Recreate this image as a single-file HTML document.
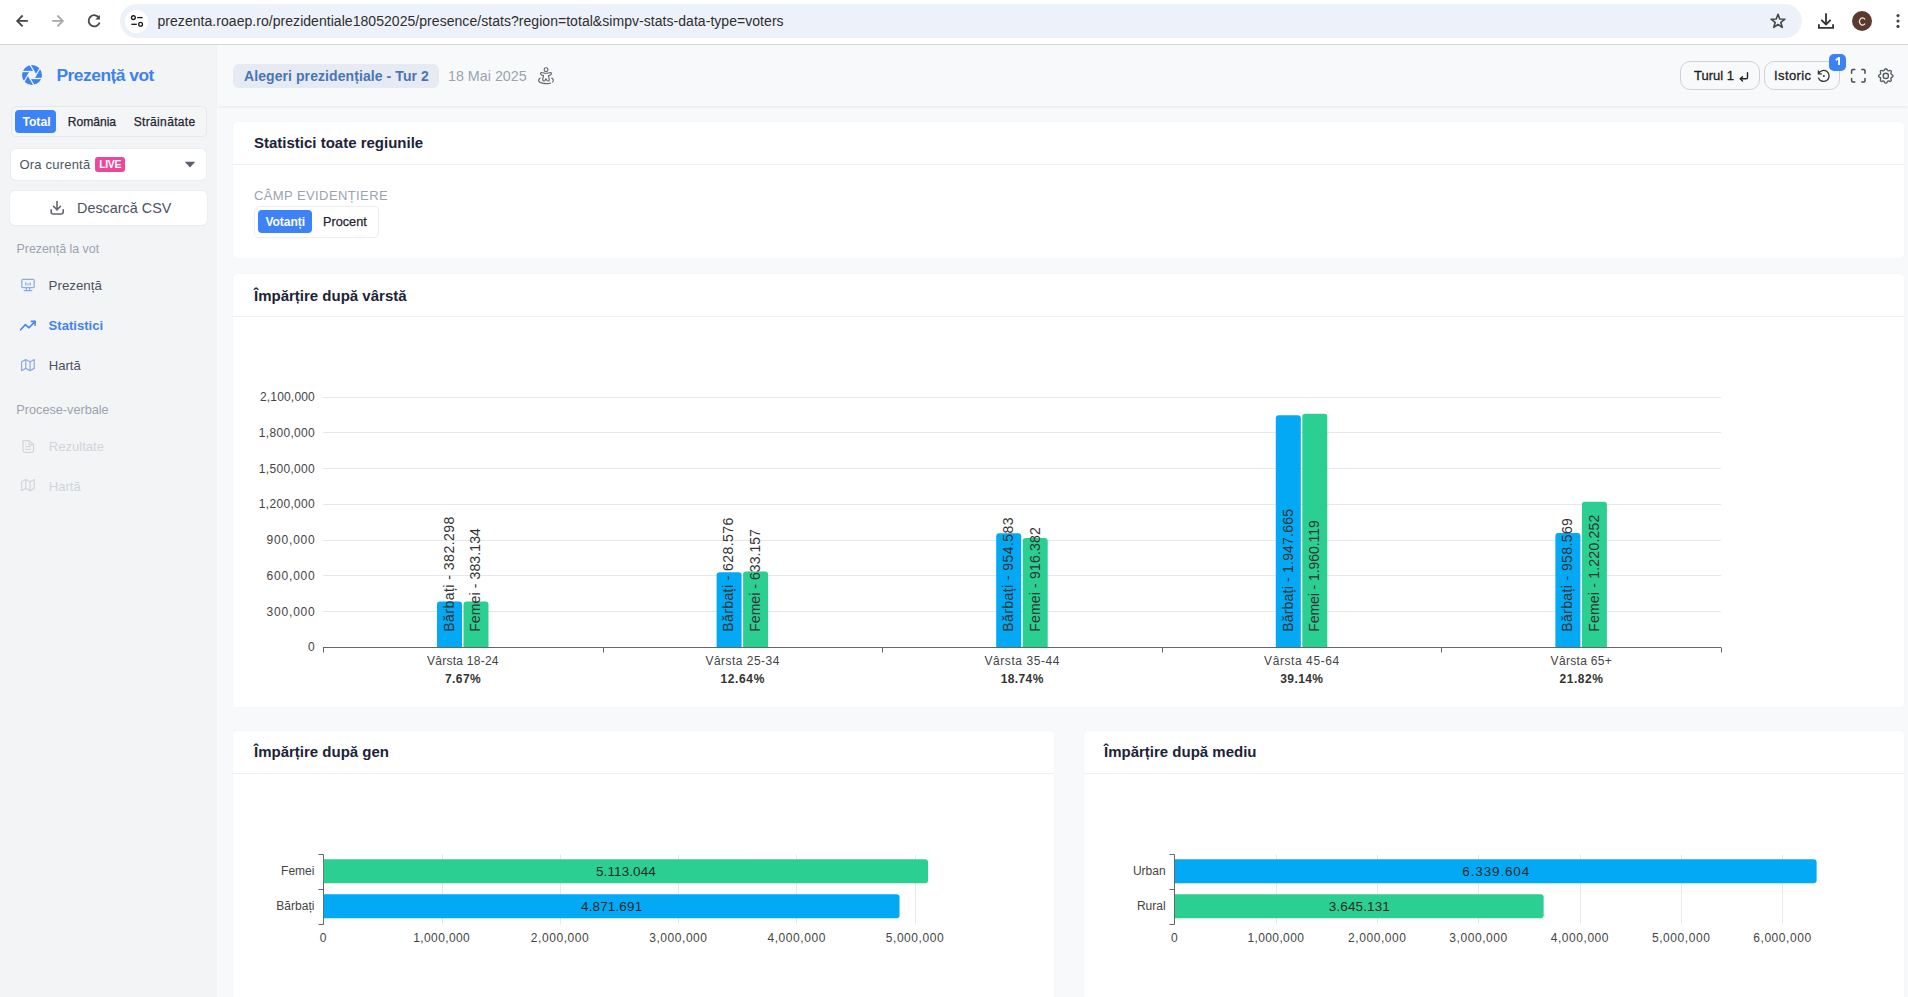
<!DOCTYPE html>
<html><head><meta charset="utf-8">
<style>
*{box-sizing:border-box;margin:0;padding:0}
html,body{width:1908px;height:997px;overflow:hidden;background:#f8f9fb;font-family:"Liberation Sans",sans-serif;color:#111}
.t{position:absolute;white-space:nowrap;line-height:1}
#chrome{position:absolute;left:0;top:0;width:1908px;height:45px;background:#fff;border-bottom:1px solid #d5d7da}
#addr{position:absolute;left:120px;top:4px;width:1682px;height:34px;border-radius:17px;background:#edf2fa}
#side{position:absolute;left:0;top:45px;width:217px;height:952px;background:#f3f4f6}
#hdr{position:absolute;left:217px;top:45px;width:1691px;height:61px;background:#f8f9fb;box-shadow:0 2px 3px -1px rgba(0,0,0,.08)}
.card{position:absolute;background:#fff;border-radius:4px;box-shadow:0 0 2px rgba(0,0,0,.045)}
.card .ch{position:absolute;left:0;top:0;right:0;height:43px;border-bottom:1px solid #eef0f3}
.ttl{position:absolute;font-size:15px;font-weight:700;color:#1c2337;white-space:nowrap;line-height:1}
svg.full{position:absolute;left:0;top:0;width:1908px;height:997px;overflow:visible}
svg text{font-family:"Liberation Sans",sans-serif}
.btnw{position:absolute;background:#fff;border-radius:5px;box-shadow:0 0 0 1px #eceef1,0 1px 2px rgba(0,0,0,.04)}
.pill{position:absolute;border:1px solid #cfd3d8;border-radius:10px;background:#f8f9fb}
</style></head><body>
<div id="chrome">
  <div id="addr"></div>
  <div style="position:absolute;left:125px;top:10px;width:23px;height:23px;border-radius:50%;background:#fff"></div>
  <div class="t" style="left:157.5px;top:14px;font-size:14px;letter-spacing:0.045px;color:#2e2e2e">prezenta.roaep.ro/prezidentiale18052025/presence/stats?region=total&amp;simpv-stats-data-type=voters</div>
</div>
<div id="side"></div>
<div id="hdr"></div>

<!-- sidebar -->
<div class="t" style="left:56.5px;top:66.5px;font-size:17.4px;font-weight:700;letter-spacing:-0.5px;color:#3d82ef">Prezență vot</div>
<div style="position:absolute;left:11px;top:106px;width:196px;height:31px;border:1px solid #e6e8eb;border-radius:5px;background:#f4f5f7"></div>
<div style="position:absolute;left:15px;top:110px;width:41px;height:23px;border-radius:4px;background:#3d82f6"></div>
<div class="t" style="left:22.4px;top:115.85px;font-size:12.2px;font-weight:700;color:#fff">Total</div>
<div class="t" style="left:67.7px;top:115.85px;font-size:12.1px;color:#1f2430;-webkit-text-stroke:0.25px #1f2430">România</div>
<div class="t" style="left:133.7px;top:115.85px;font-size:12px;letter-spacing:0.35px;color:#1f2430;-webkit-text-stroke:0.25px #1f2430">Străinătate</div>

<div class="btnw" style="left:11px;top:149px;width:195px;height:31px"></div>
<div class="t" style="left:19.5px;top:157.7px;font-size:13px;letter-spacing:0.2px;color:#4b5563">Ora curentă</div>
<div style="position:absolute;left:95px;top:157px;width:30px;height:15px;border-radius:3px;background:#ec4899"></div>
<div class="t" style="left:99.2px;top:160px;font-size:10.4px;font-weight:700;color:#fff;letter-spacing:-0.3px">LIVE</div>

<div class="btnw" style="left:10px;top:191px;width:197px;height:34px"></div>
<div class="t" style="left:77px;top:201.1px;font-size:14.4px;color:#4b5260">Descarcă CSV</div>

<div class="t" style="left:16.5px;top:243.35px;font-size:12.4px;color:#9ca3af">Prezență la vot</div>
<div class="t" style="left:48.6px;top:278.9px;font-size:13.3px;color:#4b5260">Prezență</div>
<div class="t" style="left:48.6px;top:319px;font-size:13.1px;font-weight:700;color:#4382e9">Statistici</div>
<div class="t" style="left:48.7px;top:358.85px;font-size:13.1px;color:#4b5260">Hartă</div>
<div class="t" style="left:16.3px;top:404.05px;font-size:12.7px;color:#9ca3af">Procese-verbale</div>
<div class="t" style="left:48.7px;top:440.2px;font-size:13.1px;color:#d1d5db">Rezultate</div>
<div class="t" style="left:48.7px;top:480px;font-size:13.1px;color:#d1d5db">Hartă</div>

<!-- header -->
<div style="position:absolute;left:233px;top:64px;width:206px;height:24px;border-radius:6px;background:#e6ebf3"></div>
<div class="t" style="left:244px;top:68.9px;font-size:14px;font-weight:700;letter-spacing:0.08px;color:#4a74b4">Alegeri prezidențiale - Tur 2</div>
<div class="t" style="left:448px;top:68.9px;font-size:14.3px;color:#9ca3af">18 Mai 2025</div>

<div class="pill" style="left:1680px;top:61px;width:80px;height:29px"></div>
<div class="t" style="left:1694px;top:68.9px;font-size:13px;color:#1f1f1f;-webkit-text-stroke:0.3px #1f1f1f">Turul 1</div>
<div class="pill" style="left:1764px;top:61px;width:76px;height:29px"></div>
<div class="t" style="left:1774px;top:68.9px;font-size:13px;letter-spacing:0.4px;color:#1f1f1f;-webkit-text-stroke:0.3px #1f1f1f">Istoric</div>
<div style="position:absolute;left:1829px;top:54px;width:17px;height:17px;border-radius:5px;background:#3b82f6"></div>


<!-- cards -->
<div class="card" style="left:233px;top:122px;width:1671px;height:136px"><div class="ch"></div></div>
<div class="card" style="left:233px;top:274px;width:1671px;height:433px"><div class="ch"></div></div>
<div class="card" style="left:233px;top:731px;width:821px;height:280px"><div class="ch"></div></div>
<div class="card" style="left:1084px;top:731px;width:820px;height:280px"><div class="ch"></div></div>

<div class="ttl" style="left:254px;top:135.35px">Statistici toate regiunile</div>
<div class="ttl" style="left:254px;top:287.6px">Împărțire după vârstă</div>
<div class="ttl" style="left:254px;top:744.2px">Împărțire după gen</div>
<div class="ttl" style="left:1104px;top:744.2px">Împărțire după mediu</div>

<div class="t" style="left:254px;top:188.6px;font-size:13px;letter-spacing:0.4px;color:#9ca3af">CÂMP EVIDENȚIERE</div>
<div style="position:absolute;left:254px;top:206px;width:125px;height:32px;border:1px solid #eceef1;border-radius:5px;background:#fff"></div>
<div style="position:absolute;left:258px;top:210px;width:54px;height:23px;border-radius:4px;background:#3d82f6"></div>
<div class="t" style="left:265.4px;top:215.5px;font-size:12px;font-weight:700;color:#fff">Votanți</div>
<div class="t" style="left:323px;top:215.5px;font-size:12.7px;color:#1f2430;-webkit-text-stroke:0.25px #1f2430">Procent</div>

<svg class="full" viewBox="0 0 1908 997">
<circle cx="32" cy="75" r="10" fill="#3d82ef"/><polygon points="36.04,75.00 34.02,78.50 29.98,78.50 27.96,75.00 29.98,71.50 34.02,71.50" fill="#f3f4f6"/><line x1="34.02" y1="71.50" x2="22.13" y2="71.50" stroke="#f3f4f6" stroke-width="1.3"/><line x1="36.04" y1="75.00" x2="30.10" y2="64.70" stroke="#f3f4f6" stroke-width="1.3"/><line x1="34.02" y1="78.50" x2="39.96" y2="68.20" stroke="#f3f4f6" stroke-width="1.3"/><line x1="29.98" y1="78.50" x2="41.87" y2="78.50" stroke="#f3f4f6" stroke-width="1.3"/><line x1="27.96" y1="75.00" x2="33.90" y2="85.30" stroke="#f3f4f6" stroke-width="1.3"/><line x1="29.98" y1="71.50" x2="24.04" y2="81.80" stroke="#f3f4f6" stroke-width="1.3"/><g fill="none" stroke="#474747" stroke-width="1.8" stroke-linecap="butt"><path d="M27.8,20.9 H17.5"/><path d="M22.6,15.5 L17.2,20.9 L22.6,26.3"/></g>
<g fill="none" stroke="#a9a9a9" stroke-width="1.8"><path d="M52.2,20.9 H62.5"/><path d="M57.4,15.5 L62.8,20.9 L57.4,26.3"/></g>
<g fill="none" stroke="#474747" stroke-width="1.8"><path d="M99.2,18.2 A5.6,5.6 0 1 0 99.6,22.5"/></g><path d="M99.9,14.9 V19.6 H95.2 Z" fill="#474747"/>
<g fill="none" stroke="#1f1f1f" stroke-width="1.35"><circle cx="133.4" cy="17.6" r="1.9"/><path d="M137.2,17.6 H142.6"/><circle cx="140.6" cy="24.3" r="1.9"/><path d="M131.3,24.3 H136.8"/></g>
<polygon points="1778.00,14.20 1779.76,19.07 1784.94,19.24 1780.85,22.43 1782.29,27.41 1778.00,24.50 1773.71,27.41 1775.15,22.43 1771.06,19.24 1776.24,19.07" fill="none" stroke="#474747" stroke-width="1.6" stroke-linejoin="round"/>
<g fill="none" stroke="#333" stroke-width="1.8"><path d="M1826,13.2 V24.5"/><path d="M1821.3,19.8 L1826,24.5 L1830.7,19.8"/><path d="M1818.9,24.2 V27.8 H1833.1 V24.2"/></g>
<circle cx="1862" cy="21" r="10" fill="#5a3a2e"/><path d="M1864.8,19.1 A3.0,3.6 0 1 0 1864.8,23.9" fill="none" stroke="#f6e6dc" stroke-width="1.25" stroke-linecap="round"/>
<circle cx="1898" cy="15.6" r="1.6" fill="#474747"/>
<circle cx="1898" cy="21" r="1.6" fill="#474747"/>
<circle cx="1898" cy="26.4" r="1.6" fill="#474747"/>
<path d="M184.8,161.8 L195.2,161.8 L190,167.6 Z" fill="#5a5f69"/>
<g fill="none" stroke="#62666e" stroke-width="1.6" stroke-linecap="round" stroke-linejoin="round"><path d="M57,201.6 V209.8"/><path d="M53.6,206.4 L57,209.8 L60.4,206.4"/><path d="M51.2,209.8 V212 Q51.2,214 53.2,214 H61.2 Q63.2,214 63.2,212 V209.8"/></g>
<g fill="none" stroke="#8eade3" stroke-width="1.25" stroke-linecap="round" stroke-linejoin="round"><rect x="21.8" y="279.4" width="12.4" height="8.2" rx="1"/><path d="M24.2,290.6 H31.8"/><path d="M26.4,287.6 V290.6"/><path d="M29.6,287.6 V290.6"/><path d="M25.8,285 V282.6"/><path d="M28,285 V283.8"/><path d="M30.2,285 V283.2"/></g>
<g fill="none" stroke="#4a84e4" stroke-width="1.6" stroke-linecap="round" stroke-linejoin="round"><path d="M20.6,329.8 L25.4,324.6 L29,327.8 L35,321.6"/><path d="M31.4,321.4 H35.1 V325.2"/></g>
<g fill="none" stroke="#8eade3" stroke-width="1.25" stroke-linejoin="round"><path d="M21.6,361.8 L25.7,359.6 L30.1,361.8 L34.2,359.6 V368.40000000000003 L30.1,370.6 L25.7,368.40000000000003 L21.6,370.6 Z"/><path d="M25.7,359.6 V368.40000000000003"/><path d="M30.1,361.8 V370.6"/></g>
<g fill="none" stroke="#d4d6da" stroke-width="1.25" stroke-linejoin="round"><path d="M21.6,481.8 L25.7,479.6 L30.1,481.8 L34.2,479.6 V488.40000000000003 L30.1,490.6 L25.7,488.40000000000003 L21.6,490.6 Z"/><path d="M25.7,479.6 V488.40000000000003"/><path d="M30.1,481.8 V490.6"/></g>
<g fill="none" stroke="#d4d6da" stroke-width="1.2" stroke-linejoin="round"><path d="M23,440.6 H29.2 L33.6,444.8 V450 Q33.6,452.4 31.4,452.4 H25.2 Q23,452.4 23,450 Z"/><path d="M29.2,440.6 V444.8 H33.6"/><path d="M25.4,446.6 H31"/><path d="M25.4,449.4 H31"/><path d="M25.4,443.8 H26.6"/></g>
<g fill="none" stroke="#62666e" stroke-width="1.15" stroke-linejoin="round" stroke-linecap="round"><circle cx="546" cy="69.7" r="1.9"/><path d="M544.6,73.2 L541.6,72.5 Q540.4,72.6 540.6,73.9 Q540.9,75.1 542.2,75.2 L543.5,75.5 L542.7,79.6 Q542.8,80.9 543.9,81 Q544.8,81.1 545.2,80.1 L546,78.8 L546.8,80.1 Q547.2,81.1 548.1,81 Q549.2,80.9 549.3,79.6 L548.5,75.5 L549.8,75.2 Q551.1,75.1 551.4,73.9 Q551.6,72.6 550.4,72.5 L547.4,73.2 Z"/><path d="M540.2,78 Q538.2,79.4 538.6,80.8 Q539.8,83.6 546,83.6 Q549.6,83.6 550.6,83"/><path d="M551.8,78 Q553.8,79.4 553.2,81 L552.6,82"/></g>
<g fill="none" stroke="#222" stroke-width="1.4" stroke-linecap="round" stroke-linejoin="round"><path d="M1747.5,72.8 V77.4 Q1747.5,78.8 1746.1,78.8 H1740.4"/><path d="M1742.5,76.7 L1740.3,78.8 L1742.5,80.9"/></g>
<g fill="none" stroke="#333" stroke-width="1.3" stroke-linecap="round" stroke-linejoin="round"><path d="M1818.6,73.6 A5.5,5.5 0 1 1 1818.6,78.2"/><path d="M1818.4,70.8 V73.9 H1821.4"/></g><circle cx="1823.9" cy="75.9" r="1" fill="#333"/>
<g fill="none" stroke="#474b53" stroke-width="1.5" stroke-linecap="round" stroke-linejoin="round"><path d="M1851.6,73.2 V70.8 Q1851.6,69.6 1852.8,69.6 H1854.8"/><path d="M1861.8,69.6 H1863.8 Q1865,69.6 1865,70.8 V73.2"/><path d="M1851.6,78.6 V80.8 Q1851.6,82 1852.8,82 H1854.8"/><path d="M1861.8,82 H1863.8 Q1865,82 1865,80.8 V78.6"/></g>
<path d="M1835.3,59.6 L1838.3,57 H1840 V65.1 H1838.1 V59.6 L1836.2,61.1 Z" fill="#fff"/>
<g transform="translate(1885.8,75.9) scale(0.8) translate(-12,-12)" fill="none" stroke="#555a63" stroke-width="1.7" stroke-linecap="round" stroke-linejoin="round"><path d="M10.325 4.317c.426 -1.756 2.924 -1.756 3.35 0a1.724 1.724 0 0 0 2.573 1.066c1.543 -.94 3.31 .826 2.37 2.37a1.724 1.724 0 0 0 1.065 2.572c1.756 .426 1.756 2.924 0 3.35a1.724 1.724 0 0 0 -1.066 2.573c.94 1.543 -.826 3.31 -2.37 2.37a1.724 1.724 0 0 0 -2.572 1.065c-.426 1.756 -2.924 1.756 -3.35 0a1.724 1.724 0 0 0 -2.573 -1.066c-1.543 .94 -3.31 -.826 -2.37 -2.37a1.724 1.724 0 0 0 -1.065 -2.572c-1.756 -.426 -1.756 -2.924 0 -3.35a1.724 1.724 0 0 0 1.066 -2.573c-.94 -1.543 .826 -3.31 2.37 -2.37c1 .608 2.296 .07 2.572 -1.065z"/><circle cx="12" cy="12" r="3.3"/></g>
<!--ICONS-->
<text x="314.8" y="651.3" text-anchor="end" font-size="12" fill="#444">0</text>
<line x1="323" y1="611.5" x2="1721" y2="611.5" stroke="#e6e8ec" stroke-width="1"/>
<text x="314.8" y="615.6" text-anchor="end" font-size="12" fill="#444" textLength="48.3" lengthAdjust="spacing">300,000</text>
<line x1="323" y1="575.5" x2="1721" y2="575.5" stroke="#e6e8ec" stroke-width="1"/>
<text x="314.8" y="579.9" text-anchor="end" font-size="12" fill="#444" textLength="48.3" lengthAdjust="spacing">600,000</text>
<line x1="323" y1="540.5" x2="1721" y2="540.5" stroke="#e6e8ec" stroke-width="1"/>
<text x="314.8" y="544.2" text-anchor="end" font-size="12" fill="#444" textLength="48.3" lengthAdjust="spacing">900,000</text>
<line x1="323" y1="504.5" x2="1721" y2="504.5" stroke="#e6e8ec" stroke-width="1"/>
<text x="314.8" y="508.4" text-anchor="end" font-size="12" fill="#444" textLength="56.1" lengthAdjust="spacing">1,200,000</text>
<line x1="323" y1="468.5" x2="1721" y2="468.5" stroke="#e6e8ec" stroke-width="1"/>
<text x="314.8" y="472.7" text-anchor="end" font-size="12" fill="#444" textLength="56.1" lengthAdjust="spacing">1,500,000</text>
<line x1="323" y1="432.5" x2="1721" y2="432.5" stroke="#e6e8ec" stroke-width="1"/>
<text x="314.8" y="437.0" text-anchor="end" font-size="12" fill="#444" textLength="56.1" lengthAdjust="spacing">1,800,000</text>
<line x1="323" y1="397.5" x2="1721" y2="397.5" stroke="#e6e8ec" stroke-width="1"/>
<text x="314.8" y="401.3" text-anchor="end" font-size="12" fill="#444" textLength="54.9" lengthAdjust="spacing">2,100,000</text>
<line x1="323.5" y1="647.5" x2="323.5" y2="652.5" stroke="#666" stroke-width="1"/>
<line x1="603.5" y1="647.5" x2="603.5" y2="652.5" stroke="#666" stroke-width="1"/>
<line x1="882.5" y1="647.5" x2="882.5" y2="652.5" stroke="#666" stroke-width="1"/>
<line x1="1162.5" y1="647.5" x2="1162.5" y2="652.5" stroke="#666" stroke-width="1"/>
<line x1="1441.5" y1="647.5" x2="1441.5" y2="652.5" stroke="#666" stroke-width="1"/>
<line x1="1721.5" y1="647.5" x2="1721.5" y2="652.5" stroke="#666" stroke-width="1"/>
<path d="M437.00,647.5 L437.00,604.49 Q437.00,601.49 440.00,601.49 L459.00,601.49 Q462.00,601.49 462.00,604.49 L462.00,647.5 Z" fill="#03a9f4"/>
<path d="M463.50,647.5 L463.50,604.39 Q463.50,601.39 466.50,601.39 L485.50,601.39 Q488.50,601.39 488.50,604.39 L488.50,647.5 Z" fill="#2ccf92"/>
<text transform="translate(453.80,631.8) rotate(-90)" font-size="14" fill="#333" textLength="115.2" lengthAdjust="spacing">Bărbați - 382.298</text>
<text transform="translate(480.30,631.8) rotate(-90)" font-size="14" fill="#333" textLength="103.7" lengthAdjust="spacing">Femei - 383.134</text>
<text x="462.8" y="664.5" text-anchor="middle" font-size="12" fill="#444" textLength="71.4" lengthAdjust="spacing">Vârsta 18-24</text>
<text x="462.8" y="683" text-anchor="middle" font-size="12" font-weight="700" fill="#333" textLength="35.7" lengthAdjust="spacing">7.67%</text>
<path d="M716.60,647.5 L716.60,575.17 Q716.60,572.17 719.60,572.17 L738.60,572.17 Q741.60,572.17 741.60,575.17 L741.60,647.5 Z" fill="#03a9f4"/>
<path d="M743.10,647.5 L743.10,574.62 Q743.10,571.62 746.10,571.62 L765.10,571.62 Q768.10,571.62 768.10,574.62 L768.10,647.5 Z" fill="#2ccf92"/>
<text transform="translate(733.40,631.8) rotate(-90)" font-size="14" fill="#333" textLength="114" lengthAdjust="spacing">Bărbați - 628.576</text>
<text transform="translate(759.90,631.8) rotate(-90)" font-size="14" fill="#333" textLength="102.7" lengthAdjust="spacing">Femei - 633.157</text>
<text x="742.4" y="664.5" text-anchor="middle" font-size="12" fill="#444" textLength="74.0" lengthAdjust="spacing">Vârsta 25-34</text>
<text x="742.4" y="683" text-anchor="middle" font-size="12" font-weight="700" fill="#333" textLength="43.9" lengthAdjust="spacing">12.64%</text>
<path d="M996.20,647.5 L996.20,536.36 Q996.20,533.36 999.20,533.36 L1018.20,533.36 Q1021.20,533.36 1021.20,536.36 L1021.20,647.5 Z" fill="#03a9f4"/>
<path d="M1022.70,647.5 L1022.70,540.91 Q1022.70,537.91 1025.70,537.91 L1044.70,537.91 Q1047.70,537.91 1047.70,540.91 L1047.70,647.5 Z" fill="#2ccf92"/>
<text transform="translate(1013.00,631.8) rotate(-90)" font-size="14" fill="#333" textLength="114.4" lengthAdjust="spacing">Bărbați - 954.583</text>
<text transform="translate(1039.50,631.8) rotate(-90)" font-size="14" fill="#333" textLength="104.6" lengthAdjust="spacing">Femei - 916.382</text>
<text x="1022.0" y="664.5" text-anchor="middle" font-size="12" fill="#444" textLength="75.1" lengthAdjust="spacing">Vârsta 35-44</text>
<text x="1022.0" y="683" text-anchor="middle" font-size="12" font-weight="700" fill="#333" textLength="42.6" lengthAdjust="spacing">18.74%</text>
<path d="M1275.80,647.5 L1275.80,418.14 Q1275.80,415.14 1278.80,415.14 L1297.80,415.14 Q1300.80,415.14 1300.80,418.14 L1300.80,647.5 Z" fill="#03a9f4"/>
<path d="M1302.30,647.5 L1302.30,416.65 Q1302.30,413.65 1305.30,413.65 L1324.30,413.65 Q1327.30,413.65 1327.30,416.65 L1327.30,647.5 Z" fill="#2ccf92"/>
<text transform="translate(1292.60,631.8) rotate(-90)" font-size="14" fill="#333" textLength="122.8" lengthAdjust="spacing">Bărbați - 1.947.665</text>
<text transform="translate(1319.10,631.8) rotate(-90)" font-size="14" fill="#333" textLength="111.5" lengthAdjust="spacing">Femei - 1.960.119</text>
<text x="1301.6" y="664.5" text-anchor="middle" font-size="12" fill="#444" textLength="75.1" lengthAdjust="spacing">Vârsta 45-64</text>
<text x="1301.6" y="683" text-anchor="middle" font-size="12" font-weight="700" fill="#333" textLength="42.8" lengthAdjust="spacing">39.14%</text>
<path d="M1555.40,647.5 L1555.40,535.88 Q1555.40,532.88 1558.40,532.88 L1577.40,532.88 Q1580.40,532.88 1580.40,535.88 L1580.40,647.5 Z" fill="#03a9f4"/>
<path d="M1581.90,647.5 L1581.90,504.73 Q1581.90,501.73 1584.90,501.73 L1603.90,501.73 Q1606.90,501.73 1606.90,504.73 L1606.90,647.5 Z" fill="#2ccf92"/>
<text transform="translate(1572.20,631.8) rotate(-90)" font-size="14" fill="#333" textLength="113.7" lengthAdjust="spacing">Bărbați - 958.569</text>
<text transform="translate(1598.70,631.8) rotate(-90)" font-size="14" fill="#333" textLength="117.1" lengthAdjust="spacing">Femei - 1.220.252</text>
<text x="1581.2" y="664.5" text-anchor="middle" font-size="12" fill="#444" textLength="61.2" lengthAdjust="spacing">Vârsta 65+</text>
<text x="1581.2" y="683" text-anchor="middle" font-size="12" font-weight="700" fill="#333" textLength="43.4" lengthAdjust="spacing">21.82%</text>
<line x1="323" y1="647.5" x2="1721" y2="647.5" stroke="#666" stroke-width="1"/><line x1="442.5" y1="854.5" x2="442.5" y2="924.5" stroke="#e6e8ec" stroke-width="1"/>
<line x1="560.5" y1="854.5" x2="560.5" y2="924.5" stroke="#e6e8ec" stroke-width="1"/>
<line x1="678.5" y1="854.5" x2="678.5" y2="924.5" stroke="#e6e8ec" stroke-width="1"/>
<line x1="796.5" y1="854.5" x2="796.5" y2="924.5" stroke="#e6e8ec" stroke-width="1"/>
<line x1="915.5" y1="854.5" x2="915.5" y2="924.5" stroke="#e6e8ec" stroke-width="1"/>
<text x="323.2" y="942" text-anchor="middle" font-size="12" fill="#444">0</text>
<text x="441.5" y="942" text-anchor="middle" font-size="12" fill="#444" textLength="56.4" lengthAdjust="spacing">1,000,000</text>
<text x="559.8" y="942" text-anchor="middle" font-size="12" fill="#444" textLength="57.9" lengthAdjust="spacing">2,000,000</text>
<text x="678.1" y="942" text-anchor="middle" font-size="12" fill="#444" textLength="57.9" lengthAdjust="spacing">3,000,000</text>
<text x="796.4" y="942" text-anchor="middle" font-size="12" fill="#444" textLength="57.9" lengthAdjust="spacing">4,000,000</text>
<text x="914.7" y="942" text-anchor="middle" font-size="12" fill="#444" textLength="57.9" lengthAdjust="spacing">5,000,000</text>
<line x1="323.5" y1="854.5" x2="323.5" y2="924.5" stroke="#666" stroke-width="1"/>
<line x1="318.5" y1="854.5" x2="323.5" y2="854.5" stroke="#666" stroke-width="1"/>
<line x1="318.5" y1="889.5" x2="323.5" y2="889.5" stroke="#666" stroke-width="1"/>
<line x1="318.5" y1="924.5" x2="323.5" y2="924.5" stroke="#666" stroke-width="1"/>
<path d="M323.70,859.30 L925.07,859.30 Q928.07,859.30 928.07,862.30 L928.07,880.30 Q928.07,883.30 925.07,883.30 L323.70,883.30 Z" fill="#2ccf92"/>
<text x="314.4" y="875.2" text-anchor="end" font-size="12" fill="#444">Femei</text>
<text x="625.9" y="876.0" text-anchor="middle" font-size="13.5" fill="#2a2a2a" textLength="59.9" lengthAdjust="spacing">5.113.044</text>
<path d="M323.70,894.30 L896.52,894.30 Q899.52,894.30 899.52,897.30 L899.52,915.30 Q899.52,918.30 896.52,918.30 L323.70,918.30 Z" fill="#03a9f4"/>
<text x="314.4" y="910.2" text-anchor="end" font-size="12" fill="#444">Bărbați</text>
<text x="611.6" y="911.0" text-anchor="middle" font-size="13.5" fill="#2a2a2a" textLength="61.1" lengthAdjust="spacing">4.871.691</text><line x1="1276.5" y1="854.5" x2="1276.5" y2="924.5" stroke="#e6e8ec" stroke-width="1"/>
<line x1="1377.5" y1="854.5" x2="1377.5" y2="924.5" stroke="#e6e8ec" stroke-width="1"/>
<line x1="1478.5" y1="854.5" x2="1478.5" y2="924.5" stroke="#e6e8ec" stroke-width="1"/>
<line x1="1580.5" y1="854.5" x2="1580.5" y2="924.5" stroke="#e6e8ec" stroke-width="1"/>
<line x1="1681.5" y1="854.5" x2="1681.5" y2="924.5" stroke="#e6e8ec" stroke-width="1"/>
<line x1="1782.5" y1="854.5" x2="1782.5" y2="924.5" stroke="#e6e8ec" stroke-width="1"/>
<text x="1174.4" y="942" text-anchor="middle" font-size="12" fill="#444">0</text>
<text x="1275.7" y="942" text-anchor="middle" font-size="12" fill="#444" textLength="56.4" lengthAdjust="spacing">1,000,000</text>
<text x="1377.0" y="942" text-anchor="middle" font-size="12" fill="#444" textLength="57.9" lengthAdjust="spacing">2,000,000</text>
<text x="1478.3" y="942" text-anchor="middle" font-size="12" fill="#444" textLength="57.9" lengthAdjust="spacing">3,000,000</text>
<text x="1579.6" y="942" text-anchor="middle" font-size="12" fill="#444" textLength="57.9" lengthAdjust="spacing">4,000,000</text>
<text x="1680.9" y="942" text-anchor="middle" font-size="12" fill="#444" textLength="57.9" lengthAdjust="spacing">5,000,000</text>
<text x="1782.2" y="942" text-anchor="middle" font-size="12" fill="#444" textLength="57.9" lengthAdjust="spacing">6,000,000</text>
<line x1="1174.5" y1="854.5" x2="1174.5" y2="924.5" stroke="#666" stroke-width="1"/>
<line x1="1169.5" y1="854.5" x2="1174.5" y2="854.5" stroke="#666" stroke-width="1"/>
<line x1="1169.5" y1="889.5" x2="1174.5" y2="889.5" stroke="#666" stroke-width="1"/>
<line x1="1169.5" y1="924.5" x2="1174.5" y2="924.5" stroke="#666" stroke-width="1"/>
<path d="M1174.90,859.30 L1813.60,859.30 Q1816.60,859.30 1816.60,862.30 L1816.60,880.30 Q1816.60,883.30 1813.60,883.30 L1174.90,883.30 Z" fill="#03a9f4"/>
<text x="1165.6" y="875.2" text-anchor="end" font-size="12" fill="#444">Urban</text>
<text x="1495.8" y="876.0" text-anchor="middle" font-size="13.5" fill="#2a2a2a" textLength="66.9" lengthAdjust="spacing">6.339.604</text>
<path d="M1174.90,894.30 L1540.65,894.30 Q1543.65,894.30 1543.65,897.30 L1543.65,915.30 Q1543.65,918.30 1540.65,918.30 L1174.90,918.30 Z" fill="#2ccf92"/>
<text x="1165.6" y="910.2" text-anchor="end" font-size="12" fill="#444">Rural</text>
<text x="1359.3" y="911.0" text-anchor="middle" font-size="13.5" fill="#2a2a2a" textLength="61.0" lengthAdjust="spacing">3.645.131</text>
</svg>
</body></html>
